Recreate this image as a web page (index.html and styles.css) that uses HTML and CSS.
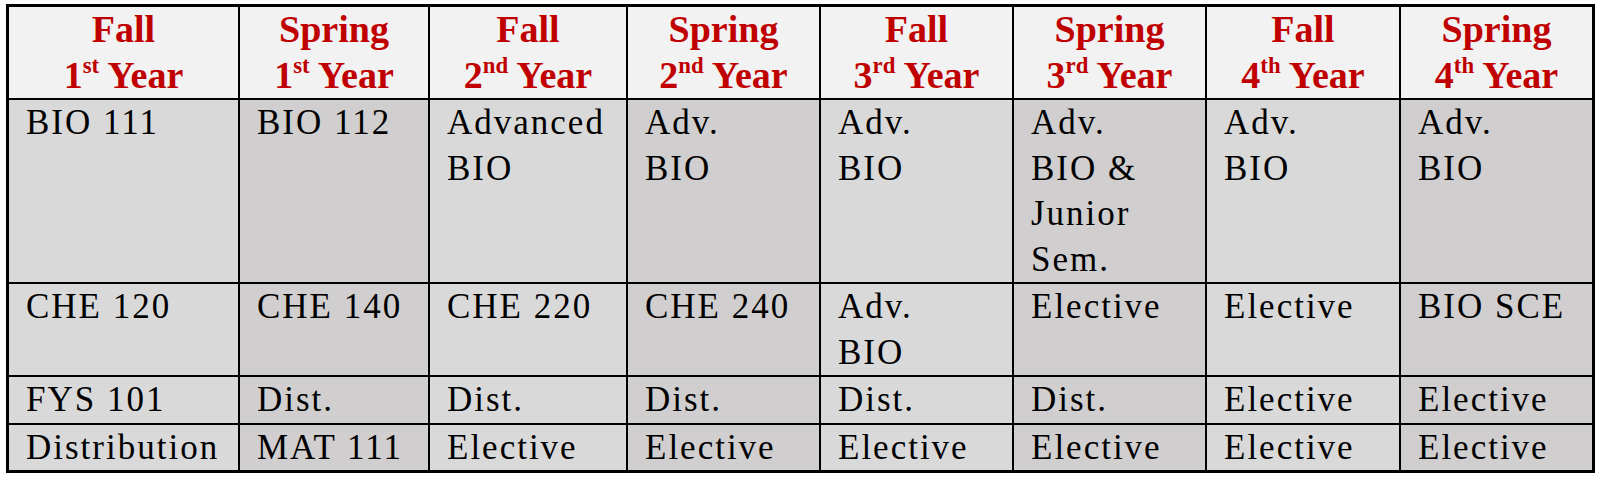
FILE: index.html
```html
<!DOCTYPE html>
<html lang="en">
<head>
<meta charset="utf-8">
<title>Biology Four-Year Plan</title>
<link rel="stylesheet" href="styles.css">
</head>
<body>
<table class="plan">
  <colgroup>
    <col class="c1"><col class="c2"><col class="c3"><col class="c4">
    <col class="c5"><col class="c6"><col class="c7"><col class="c8">
  </colgroup>
  <thead>
    <tr>
      <th>Fall<br>1<sup>st</sup> Year</th>
      <th>Spring<br>1<sup>st</sup> Year</th>
      <th>Fall<br>2<sup>nd</sup> Year</th>
      <th>Spring<br>2<sup>nd</sup> Year</th>
      <th>Fall<br>3<sup>rd</sup> Year</th>
      <th>Spring<br>3<sup>rd</sup> Year</th>
      <th>Fall<br>4<sup>th</sup> Year</th>
      <th>Spring<br>4<sup>th</sup> Year</th>
    </tr>
  </thead>
  <tbody>
    <tr>
      <td>BIO 111</td>
      <td>BIO 112</td>
      <td>Advanced<br>BIO</td>
      <td>Adv.<br>BIO</td>
      <td>Adv.<br>BIO</td>
      <td>Adv.<br>BIO &amp;<br>Junior<br>Sem.</td>
      <td>Adv.<br>BIO</td>
      <td>Adv.<br>BIO</td>
    </tr>
    <tr>
      <td>CHE 120</td>
      <td>CHE 140</td>
      <td>CHE 220</td>
      <td>CHE 240</td>
      <td>Adv.<br>BIO</td>
      <td>Elective</td>
      <td>Elective</td>
      <td>BIO SCE</td>
    </tr>
    <tr>
      <td>FYS 101</td>
      <td>Dist.</td>
      <td>Dist.</td>
      <td>Dist.</td>
      <td>Dist.</td>
      <td>Dist.</td>
      <td>Elective</td>
      <td>Elective</td>
    </tr>
    <tr>
      <td>Distribution</td>
      <td>MAT 111</td>
      <td>Elective</td>
      <td>Elective</td>
      <td>Elective</td>
      <td>Elective</td>
      <td>Elective</td>
      <td>Elective</td>
    </tr>
  </tbody>
</table>
</body>
</html>
```

FILE: styles.css
```css
html, body {
  background: #ffffff;
}

body {
  margin: 0;
  padding: 4px 5px 0 6px;
  font-family: "Liberation Serif", "Times New Roman", serif;
}

.plan {
  width: 1589px;
  table-layout: fixed;
  border-collapse: collapse;
  border: 3px solid #000000;
}

.c1 { width: 231.5px; }
.c2 { width: 190px; }
.c3 { width: 198px; }
.c4 { width: 193px; }
.c5 { width: 193px; }
.c6 { width: 193px; }
.c7 { width: 194px; }
.c8 { width: 193.5px; }

.plan th,
.plan td {
  border: 2px solid #000000;
  padding: 0;
  font-family: "Liberation Serif", "Times New Roman", serif;
}

.plan th {
  background: #f2f2f2;
  color: #c00000;
  font-size: 38px;
  font-weight: bold;
  line-height: 45.5px;
  text-align: center;
  vertical-align: top;
}

.plan th sup {
  font-size: 0.6em;
  line-height: 0;
  vertical-align: 0.65em;
}

.plan td {
  font-size: 35px;
  line-height: 45.5px;
  letter-spacing: 2px;
  color: #000000;
  text-align: left;
  vertical-align: top;
  padding-left: 17px;
  background: #d9d9d9;
}

.plan td:nth-child(even) {
  background: #d0cece;
}
```
